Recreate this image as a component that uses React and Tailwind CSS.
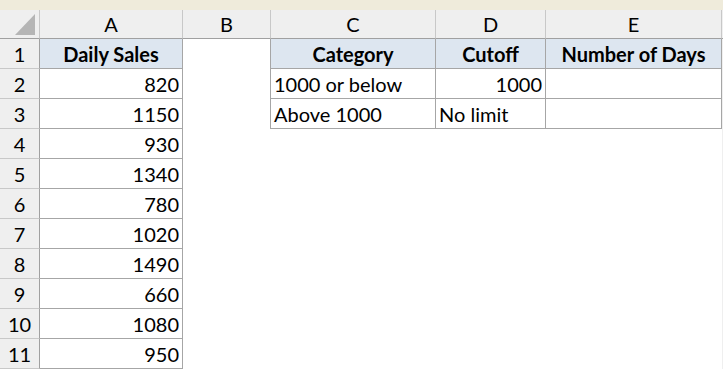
import React from 'react';

const sales = [820, 1150, 930, 1340, 780, 1020, 1490, 660, 1080, 950];

// grid template: row header, A, B, C, D, E, spare
const cols = 'grid-cols-[40px_143px_88px_165px_110px_176px_1px]';

function HeaderCell({ children, last }) {
  return (
    <div
      className={`h-[29px] flex items-center justify-center bg-[#efefef] border-b border-b-[#a0a0a0] ${
        last ? '' : 'border-r border-r-[#c8c8c8]'
      } text-[20px] text-black`}
    >
      {children}
    </div>
  );
}

export default function App() {
  return (
    <div className="w-[723px] h-[370px] bg-white overflow-hidden font-['Lato','Open_Sans',sans-serif] leading-none">
      {/* formula bar strip */}
      <div className="h-[10px] bg-[#efebdb]" />

      <div className={`grid ${cols}`}>
        {/* column headers */}
        <div className="h-[29px] bg-[#efefef] border-b border-b-[#a0a0a0] border-r border-r-[#c8c8c8] flex items-end justify-end pr-[4px] pb-[3px]">
          <svg width="20" height="21" viewBox="0 0 20 21">
            <polygon points="20,0 20,21 0,21" fill="#b5b5b5" />
          </svg>
        </div>
        <HeaderCell>A</HeaderCell>
        <HeaderCell>B</HeaderCell>
        <HeaderCell>C</HeaderCell>
        <HeaderCell>D</HeaderCell>
        <HeaderCell>E</HeaderCell>
        <div className="h-[29px] bg-[#efefef] border-b border-b-[#a0a0a0]" />

        {/* row 1 */}
        <RowNum n={1} />
        <div className="h-[30px] bg-[#dde6f0] border-r border-b border-[#a6a6a6] flex items-center justify-center font-bold text-[20px]">
          Daily Sales
        </div>
        <div className="h-[30px] border-r border-[#a6a6a6]" />
        <div className="h-[30px] bg-[#dde6f0] border-r border-b border-[#a6a6a6] flex items-center justify-center font-bold text-[20px]">
          Category
        </div>
        <div className="h-[30px] bg-[#dde6f0] border-r border-b border-[#a6a6a6] flex items-center justify-center font-bold text-[20px]">
          Cutoff
        </div>
        <div className="h-[30px] bg-[#dde6f0] border-r border-b border-[#a6a6a6] flex items-center justify-center font-bold text-[20px]">
          Number of Days
        </div>
        <div className="h-[30px] bg-[#efefef]" />

        {/* row 2 */}
        <RowNum n={2} />
        <Num v={sales[0]} />
        <div className="h-[30px] border-r border-[#a6a6a6]" />
        <div className="h-[30px] border-r border-b border-[#a6a6a6] flex items-center pl-[3px] text-[20px]">1000 or below</div>
        <div className="h-[30px] border-r border-b border-[#a6a6a6] flex items-center justify-end pr-[3px] text-[20px]">1000</div>
        <div className="h-[30px] border-r border-b border-[#a6a6a6]" />
        <div className="h-[30px] bg-[#efefef]" />

        {/* row 3 */}
        <RowNum n={3} />
        <Num v={sales[1]} />
        <div className="h-[30px] border-r border-[#a6a6a6]" />
        <div className="h-[30px] border-r border-b border-[#a6a6a6] flex items-center pl-[3px] text-[20px]">Above 1000</div>
        <div className="h-[30px] border-r border-b border-[#a6a6a6] flex items-center pl-[3px] text-[20px]">No limit</div>
        <div className="h-[30px] border-r border-b border-[#a6a6a6]" />
        <div className="h-[30px] bg-[#efefef]" />

        {/* rows 4-11 */}
        {sales.slice(2).map((v, i) => (
          <React.Fragment key={i}>
            <RowNum n={i + 4} />
            <Num v={v} />
            <div className="col-span-4 h-[30px]" />
            <div className="h-[30px] bg-[#efefef]" />
          </React.Fragment>
        ))}
      </div>
    </div>
  );
}

function RowNum({ n }) {
  return (
    <div className="h-[30px] bg-[#efefef] border-r border-r-[#a0a0a0] border-b border-b-[#c8c8c8] flex items-center justify-center text-[20px]">
      {n}
    </div>
  );
}

function Num({ v }) {
  return (
    <div className="h-[30px] border-r border-b border-[#a6a6a6] flex items-center justify-end pr-[3px] text-[20px]">
      {v}
    </div>
  );
}
